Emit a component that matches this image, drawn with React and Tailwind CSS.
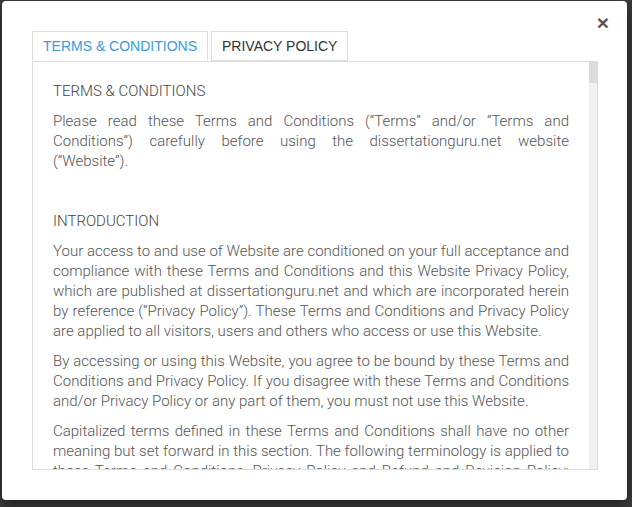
export default function App() {
  return (
    <div className="h-[507px] w-[632px] bg-[#3b3b3b] pl-[2px] pt-[1px]">
      <div className="relative h-[499px] w-[625px] rounded-[4px] bg-white pl-[30px] pt-[30px] shadow-[0_5px_15px_rgba(0,0,0,0.5)]">
        <button className="absolute right-[18px] top-[9px] font-['Liberation_Sans',sans-serif] text-[21px] font-bold leading-[26px] text-[#555]">
          ×
        </button>

        <div className="flex font-['Liberation_Sans',Arial,sans-serif] text-[14px]">
          <div className="relative z-10 -mb-px h-[30px] border border-b-white border-[#ddd] bg-white px-[10px] leading-[28px] text-[#3a9ad9]">
            TERMS &amp; CONDITIONS
          </div>
          <div className="ml-[3px] h-[30px] border border-[#ddd] px-[10px] leading-[28px] text-[#333]">
            PRIVACY POLICY
          </div>
        </div>

        <div className="flex h-[409px] w-[566px] border border-[#ddd] font-['Roboto',sans-serif] text-[15px] font-light leading-[20px] text-[#555]">
          <div className="flex-1 overflow-hidden px-[20px] pt-[19px] text-justify">
            <p className="mb-[10px] text-[#444]">TERMS &amp; CONDITIONS</p>
            <p className="mb-[10px]">
              Please read these Terms and Conditions (“Terms” and/or “Terms and Conditions”) carefully before using the dissertationguru.net website (“Website”).
            </p>
            <p className="mb-[10px]">&nbsp;</p>
            <p className="mb-[10px] text-[#444]">INTRODUCTION</p>
            <p className="mb-[10px]">
              Your access to and use of Website are conditioned on your full acceptance and compliance with these Terms and Conditions and this Website Privacy Policy, which are published at dissertationguru.net and which are incorporated herein by reference (“Privacy Policy”). These Terms and Conditions and Privacy Policy are applied to all visitors, users and others who access or use this Website.
            </p>
            <p className="mb-[10px]">
              By accessing or using this Website, you agree to be bound by these Terms and Conditions and Privacy Policy. If you disagree with these Terms and Conditions and/or Privacy Policy or any part of them, you must not use this Website.
            </p>
            <p className="mb-[10px]">
              Capitalized terms defined in these Terms and Conditions shall have no other meaning but set forward in this section. The following terminology is applied to these Terms and Conditions, Privacy Policy and Refund and Revision Policy: “Client”, “You” and “Your” refer to you, the person accessing this Website.
            </p>
          </div>
          <div className="w-[8px] bg-[#f1f1f1]">
            <div className="h-[21px] bg-[#dcdcdc]" />
          </div>
        </div>
      </div>
    </div>
  )
}
